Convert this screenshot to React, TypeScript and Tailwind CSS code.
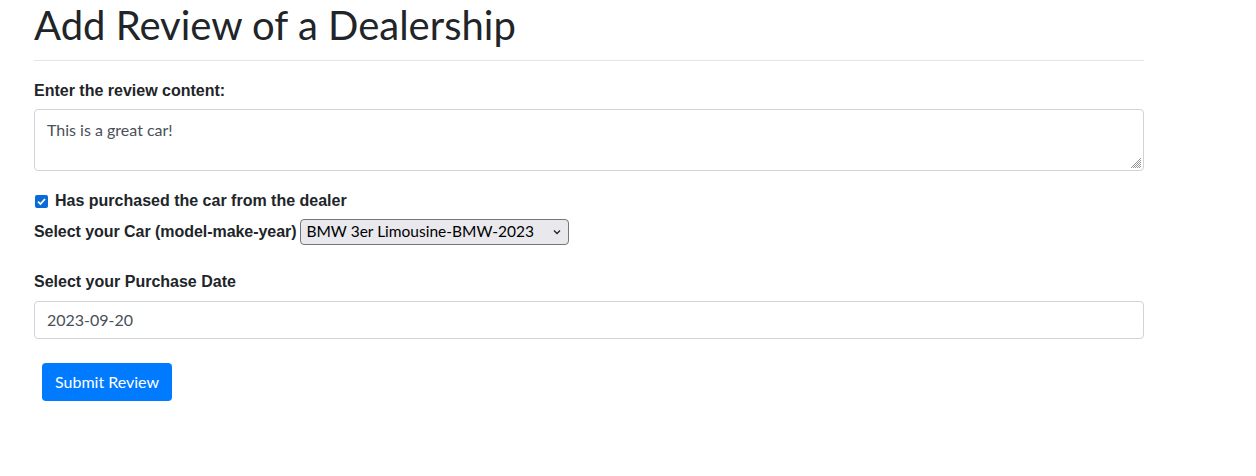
export default function App() {
  const bold = { fontFamily: "'Liberation Sans', sans-serif" };
  return (
    <div className="bg-white min-h-[476px] text-[#212529]" style={{ fontFamily: "Lato, sans-serif" }}>
      <div className="ml-[34px] w-[1110px]">
        <h1 className="text-[40px] leading-[48px] pt-[1px] font-normal">Add Review of a Dealership</h1>
        <hr className="mt-[11px] border-0 border-t border-[#e5e5e5]" />
        <div className="mt-[18px] text-[16px] leading-[24px] font-bold" style={bold}>Enter the review content:</div>
        <div className="mt-[6px] h-[62px] border border-[#ced4da] rounded-[4px] px-[12px] py-[8px] relative">
          <span className="text-[16px] leading-[24px] text-[#495057]">This is a great car!</span>
          <svg className="absolute right-[1px] bottom-[1px]" width="14" height="14" viewBox="0 0 14 14">
            <path d="M13 3 L3 13 M13 7 L7 13 M13 11 L11 13 M13 5 L5 13 M13 9 L9 13" stroke="#8a8a8a" strokeWidth="0.9" />
          </svg>
        </div>
        <div className="mt-[20px] flex items-center h-[20px]">
          <span className="w-[13px] h-[13px] ml-[1px] rounded-[2px] bg-[#0b6bd6] flex items-center justify-center">
            <svg width="11" height="11" viewBox="0 0 11 11">
              <path d="M2 5.6 L4.4 8 L9 3" stroke="white" strokeWidth="1.8" fill="none" />
            </svg>
          </span>
          <span className="ml-[7px] text-[16px] font-bold" style={bold}>Has purchased the car from the dealer</span>
        </div>
        <div className="mt-[8px] flex items-center h-[26px]">
          <span className="text-[16px] font-bold tracking-[-0.05px]" style={bold}>Select your Car (model-make-year)</span>
          <div className="ml-[4px] w-[269px] h-[26px] border border-[#767676] rounded-[4px] bg-[#e9e9ed] flex items-center pl-[5px] pr-[6px]">
            <span className="text-[15.5px] text-black flex-1">BMW 3er Limousine-BMW-2023</span>
            <svg width="10" height="10" viewBox="0 0 10 10">
              <path d="M2 3.5 L5 6.5 L8 3.5" stroke="#222" strokeWidth="1.3" fill="none" />
            </svg>
          </div>
        </div>
        <div className="mt-[25px] text-[16px] leading-[24px] font-bold" style={bold}>Select your Purchase Date</div>
        <div className="mt-[7px] h-[38px] border border-[#ced4da] rounded-[4px] px-[12px] flex items-center">
          <span className="text-[16px] text-[#495057]">2023-09-20</span>
        </div>
        <button className="mt-[24px] ml-[8px] h-[38px] px-[13px] rounded-[4px] bg-[#007bff] text-white text-[16px]">Submit Review</button>
      </div>
    </div>
  );
}
